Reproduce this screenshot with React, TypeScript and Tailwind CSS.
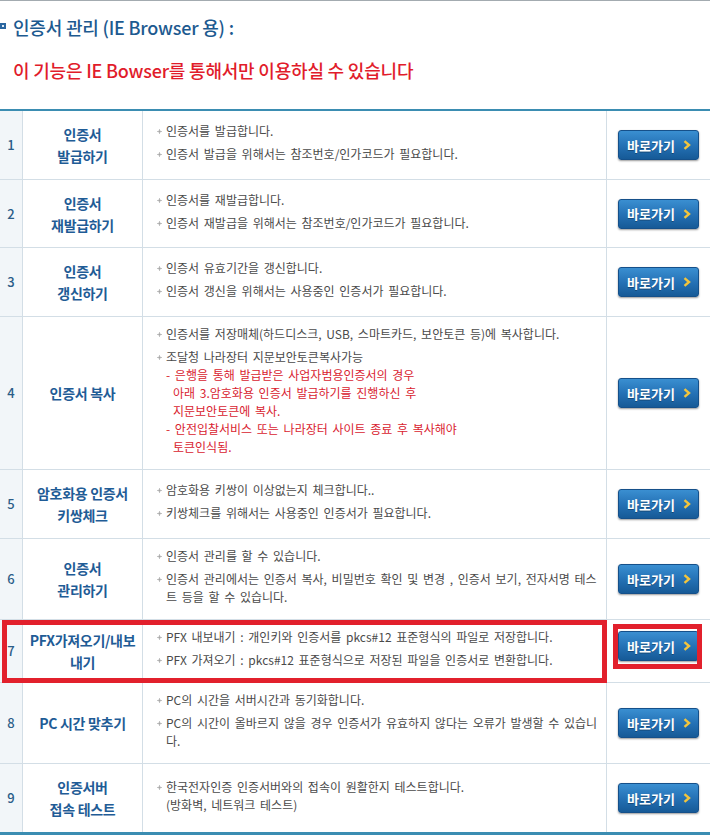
import React from "react";

type Row = {
  no: number;
  name: React.ReactNode;
  h: string;
  items: React.ReactNode[];
  highlight?: boolean;
};

const Bullet = () => (
  <span className="shrink-0 w-[5px] mr-[4px] pt-[7px] flex">
    <svg width="5" height="5" viewBox="0 0 5 5">
      <rect x="2" y="0" width="1" height="5" fill="#c4c4c4" />
      <rect x="0" y="2" width="5" height="1" fill="#c4c4c4" />
      <rect x="1.5" y="1.5" width="2" height="2" fill="#a8a8a8" />
    </svg>
  </span>
);

const GoButton = () => (
  <button className="w-[81px] h-[30px] rounded-[3px] border border-[#15508a] bg-linear-to-b from-[#3a8fd1] via-[#2572b6] to-[#165a97] shadow-[0_1px_2px_rgba(0,0,0,0.4)] flex items-center justify-center gap-[8px] pl-[2px] text-white text-[13px] font-bold leading-none [text-shadow:0_1px_0_rgba(0,0,0,0.3)]">
    <span>바로가기</span>
    <svg width="8" height="10" viewBox="0 0 8 10">
      <polyline
        points="1.5,1.2 6,5 1.5,8.8"
        fill="none"
        stroke="#f3c53c"
        strokeWidth="2.4"
        strokeLinejoin="miter"
      />
    </svg>
  </button>
);

const Red = ({ children }: { children: React.ReactNode }) => (
  <div className="text-[#d92330]">{children}</div>
);

const rows: Row[] = [
  {
    no: 1,
    name: (
      <>
        인증서
        <br />
        발급하기
      </>
    ),
    h: "h-[69px]",
    items: [
      "인증서를 발급합니다.",
      "인증서 발급을 위해서는 참조번호/인가코드가 필요합니다.",
    ],
  },
  {
    no: 2,
    name: (
      <>
        인증서
        <br />
        재발급하기
      </>
    ),
    h: "h-[68px]",
    items: [
      "인증서를 재발급합니다.",
      "인증서 재발급을 위해서는 참조번호/인가코드가 필요합니다.",
    ],
  },
  {
    no: 3,
    name: (
      <>
        인증서
        <br />
        갱신하기
      </>
    ),
    h: "h-[69px]",
    items: [
      "인증서 유효기간을 갱신합니다.",
      "인증서 갱신을 위해서는 사용중인 인증서가 필요합니다.",
    ],
  },
  {
    no: 4,
    name: <>인증서 복사</>,
    h: "h-[153px]",
    items: [
      "인증서를 저장매체(하드디스크, USB, 스마트카드, 보안토큰 등)에 복사합니다.",
      <>
        <div>조달청 나라장터 지문보안토큰복사가능</div>
        <Red>- 은행을 통해 발급받은 사업자범용인증서의 경우</Red>
        <Red>
          <div className="pl-[7px]">아래 3.암호화용 인증서 발급하기를 진행하신 후</div>
        </Red>
        <Red>
          <div className="pl-[7px]">지문보안토큰에 복사.</div>
        </Red>
        <Red>- 안전입찰서비스 또는 나라장터 사이트 종료 후 복사해야</Red>
        <Red>
          <div className="pl-[7px]">토큰인식됨.</div>
        </Red>
      </>,
    ],
  },
  {
    no: 5,
    name: (
      <>
        암호화용 인증서
        <br />
        키쌍체크
      </>
    ),
    h: "h-[69px]",
    items: [
      "암호화용 키쌍이 이상없는지 체크합니다..",
      "키쌍체크를 위해서는 사용중인 인증서가 필요합니다.",
    ],
  },
  {
    no: 6,
    name: (
      <>
        인증서
        <br />
        관리하기
      </>
    ),
    h: "h-[81px]",
    items: [
      "인증서 관리를 할 수 있습니다.",
      <>
        <div className="whitespace-nowrap">
          인증서 관리에서는 인증서 복사, 비밀번호 확인 및 변경 , 인증서 보기, 전자서명 테스
        </div>
        <div>트 등을 할 수 있습니다.</div>
      </>,
    ],
  },
  {
    no: 7,
    name: (
      <>
        PFX가져오기/내보
        <br />
        내기
      </>
    ),
    h: "h-[63px]",
    highlight: true,
    items: [
      "PFX 내보내기 : 개인키와 인증서를 pkcs#12 표준형식의 파일로 저장합니다.",
      "PFX 가져오기 : pkcs#12 표준형식으로 저장된 파일을 인증서로 변환합니다.",
    ],
  },
  {
    no: 8,
    name: <>PC 시간 맞추기</>,
    h: "h-[81px]",
    items: [
      "PC의 시간을 서버시간과 동기화합니다.",
      <>
        <div className="whitespace-nowrap">
          PC의 시간이 올바르지 않을 경우 인증서가 유효하지 않다는 오류가 발생할 수 있습니
        </div>
        <div>다.</div>
      </>,
    ],
  },
  {
    no: 9,
    name: (
      <>
        인증서버
        <br />
        접속 테스트
      </>
    ),
    h: "h-[68px]",
    items: [
      <>
        <div>한국전자인증 인증서버와의 접속이 원활한지 테스트합니다.</div>
        <div>(방화벽, 네트워크 테스트)</div>
      </>,
    ],
  },
];

export default function App() {
  return (
    <div className="w-[710px] h-[836px] bg-white overflow-hidden font-['Noto_Sans_CJK_KR','Noto_Sans',sans-serif]">
      <div className="h-px bg-[#a3abb0]" />
      <div className="pt-[14px] h-[39px] flex items-start">
        <div className="h-[24px] flex items-center">
          <span className="w-[6px] h-[6px] border-2 border-[#2a66a0] bg-[#dfeaf5] -mt-[3px]" />
          <span className="ml-[7px] text-[18px] font-medium leading-[24px] text-[#1d5a90] tracking-[-0.2px]">
            인증서 관리 (IE Browser 용) :
          </span>
        </div>
      </div>
      <div className="mt-[18px] pl-[13px] text-[18px] font-medium leading-[24px] text-[#e11c2b] tracking-[-0.2px]">
        이 기능은 IE Bowser를 통해서만 이용하실 수 있습니다
      </div>

      <div className="mt-[27px] border-t-2 border-b-[3px] border-[#3b8db2]">
        {rows.map((r, idx) => (
          <div
            key={r.no}
            className={`relative grid grid-cols-[23px_120px_464px_103px] ${r.h} ${
              idx < rows.length - 1 ? "border-b border-[#d3dee6]" : ""
            }`}
          >
            <div className="bg-[#f2f6f9] border-r border-[#d3dee6] flex items-center justify-center text-[13px] font-medium text-[#2b5d88]">
              {r.no}
            </div>
            <div className="border-r border-[#d3dee6] flex items-center justify-center text-center text-[14px] font-bold leading-[22px] text-[#1f5c96] tracking-[-0.3px]">
              <div>{r.name}</div>
            </div>
            <div className="border-r border-[#d3dee6] flex flex-col justify-center pl-[14px] pr-[4px] pb-[5px] text-[12px] leading-[18px] text-[#4a4a4a] [word-spacing:2px]">
              {r.items.map((it, i) => (
                <div key={i} className={`flex ${i > 0 ? "mt-[5px]" : ""}`}>
                  <Bullet />
                  <div>{it}</div>
                </div>
              ))}
            </div>
            <div
              className={`flex items-center justify-center pr-[1px] ${
                r.highlight ? "pb-[10px]" : ""
              }`}
            >
              <GoButton />
            </div>
            {r.highlight && (
              <>
                <div className="absolute left-[2px] top-0 w-[605px] h-[63px] border-[5px] border-[#e2202c] pointer-events-none" />
                <div className="absolute left-[613px] top-[4px] w-[89px] h-[45px] border-[5px] border-[#e2202c] pointer-events-none" />
              </>
            )}
          </div>
        ))}
      </div>
    </div>
  );
}
